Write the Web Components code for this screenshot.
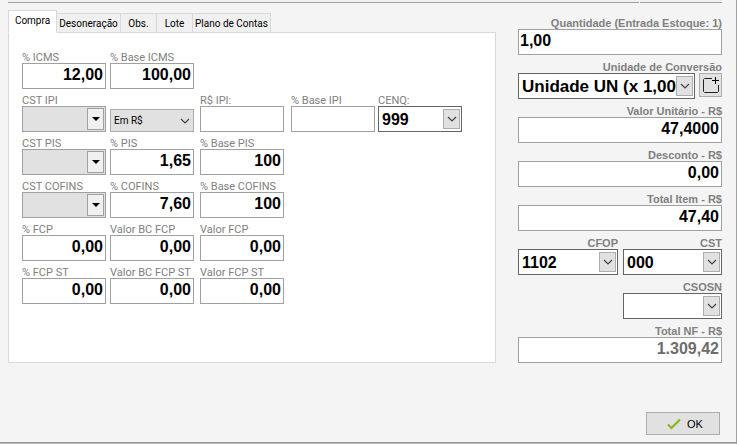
<!DOCTYPE html>
<html lang="pt-BR">
<head>
<meta charset="utf-8">
<title>Item da nota</title>
<style>
html, body { margin: 0; background: #f4f4f4; font-family: "Liberation Sans", Arial, sans-serif; }
</style>
</head>
<body>
<item-window></item-window>

<script>
const chevron = '<svg viewBox="0 0 16 16" width="16" height="16" aria-hidden="true"><path d="M4 6l4 4 4-4" fill="none" stroke="#444" stroke-width="1.2"/></svg>';
const triangle = '<svg viewBox="0 0 16 16" width="16" height="16" aria-hidden="true"><path d="M4 6h8l-4 4z" fill="#000"/></svg>';

function define(name, html, setup) {
  const template = document.createElement('template');
  template.innerHTML = html;
  customElements.define(name, class extends HTMLElement {
    connectedCallback() {
      if (this.shadowRoot) return;
      const root = this.attachShadow({ mode: 'open' });
      root.append(template.content.cloneNode(true));
      if (setup) setup(this, root);
    }
  });
}

const labelStyle = `
  *, *::before { box-sizing: border-box; }
  :host { display: flex; flex-direction: column; min-width: 0; }
  label { display: block; height: 13px; line-height: 15px; font-family: var(--label-font, Roboto, sans-serif); font-size: 11px; font-weight: var(--label-weight, 400);
    text-align: var(--label-align, left); color: #808080; white-space: nowrap; }
`;

define('text-field', `
<style>${labelStyle}
  input { display: block; width: 100%; height: 26px; margin: 0; padding: 0 2px 3px; border: 1px solid #a0a0a0; border-radius: 0;
    background: #fff; color: #000; font: bold 16px "Liberation Sans", Arial, sans-serif; text-align: right; outline: none; }
  :host([start]) input { text-align: left; padding-left: 1px; }
  :host([muted]) input { color: #6d6d6d; }
</style>
<label for="control"></label><input id="control" type="text">`, (host, root) => {
  root.querySelector('label').textContent = host.getAttribute('label');
  root.querySelector('input').value = host.getAttribute('value') || '';
});

const comboStyle = `
  .box { display: grid; grid-template-columns: minmax(0, 1fr) auto; height: 26px; padding: 2px 1px 2px 2px; border: 1px solid #646464; background: #fff; }
  select { grid-area: 1 / 1 / 2 / 3; appearance: none; width: 100%; min-width: 0; margin: 0; padding: 0 18px 0 1px; border: 0; border-radius: 0;
    background: transparent; color: #000; font: bold 16px "Liberation Sans", Arial, sans-serif; outline: none; }
  .arrow { grid-area: 1 / 2; display: grid; place-items: center; width: 17px; border: 1px solid #adadad; background: #e1e1e1; pointer-events: none; }
`;

define('select-field', `
<style>${labelStyle}${comboStyle}
  :host([kind=code]) .box { border-color: #a0a0a0; padding: 1px; background: #e1e1e1; }
  :host([kind=code]) .arrow { background: #f0f0f0; border-color: #a0a0a0; }
  :host([kind=plain]) .box { height: 23px; margin-top: 3px; padding: 0; border-color: #adadad; background: #e1e1e1; }
  :host([kind=plain]) .arrow { border: 0; background: none; }
  :host([kind=plain]) select { font-family: Roboto, sans-serif; font-size: 10px; font-weight: 400; padding-left: 3px; }
</style>
<label for="control"></label>
<div class="box"><select id="control"><option></option></select><span class="arrow"></span></div>`, (host, root) => {
  const select = root.querySelector('select');
  root.querySelector('label').textContent = host.getAttribute('label') || '';
  if (!host.getAttribute('label')) select.setAttribute('aria-label', host.getAttribute('name'));
  root.querySelector('option').textContent = host.getAttribute('value') || '';
  root.querySelector('.arrow').innerHTML = host.getAttribute('kind') === 'code' ? triangle : chevron;
});

define('tab-button', `
<style>
  :host { display: block; margin-left: -1px; }
  button { display: block; box-sizing: border-box; min-width: 37px; height: 20px; margin: 0; padding: 0 2px; border: 1px solid #d9d9d9; border-radius: 0;
    background: #f0f0f0; color: #000; font: 10px Roboto, sans-serif; white-space: nowrap; }
  :host([active]) { margin-left: 0; z-index: 1; }
  :host([active]) button { height: 23px; min-width: 49px; padding-bottom: 3px; border-bottom-color: #fff; background: #fff; }
  :host([wide]) button { min-width: 65px; }
</style>
<button type="button" role="tab"><slot></slot></button>`, (host, root) => {
  root.querySelector('button').setAttribute('aria-selected', host.hasAttribute('active'));
});

define('tax-panel', `
<style>
  :host { display: flex; flex-direction: column; min-width: 0; }
  nav { display: flex; align-items: flex-end; }
  section { flex: 1; margin-top: -1px; padding: 17px 33px 40px 13px; border: 1px solid #d9d9d9; background: #fff; }
  .fields { display: grid; grid-template-columns: 88fr 90fr 91fr 87fr 84fr; row-gap: 4px; }
  .fields > * { width: 84px; }
  .first { grid-column: 1; }
</style>
<nav role="tablist">
  <tab-button active>Compra</tab-button><tab-button wide>Desoneração</tab-button><tab-button>Obs.</tab-button><tab-button>Lote</tab-button><tab-button>Plano de Contas</tab-button>
</nav>
<section>
  <div class="fields">
    <text-field label="% ICMS" value="12,00"></text-field>
    <text-field label="% Base ICMS" value="100,00"></text-field>
    <select-field class="first" kind="code" label="CST IPI"></select-field>
    <select-field kind="plain" name="Tipo de IPI" value="Em R$"></select-field>
    <text-field label="R$ IPI:"></text-field>
    <text-field label="% Base IPI"></text-field>
    <select-field label="CENQ:" value="999"></select-field>
    <select-field class="first" kind="code" label="CST PIS"></select-field>
    <text-field label="% PIS" value="1,65"></text-field>
    <text-field label="% Base PIS" value="100"></text-field>
    <select-field class="first" kind="code" label="CST COFINS"></select-field>
    <text-field label="% COFINS" value="7,60"></text-field>
    <text-field label="% Base COFINS" value="100"></text-field>
    <text-field class="first" label="% FCP" value="0,00"></text-field>
    <text-field label="Valor BC FCP" value="0,00"></text-field>
    <text-field label="Valor FCP" value="0,00"></text-field>
    <text-field class="first" label="% FCP ST" value="0,00"></text-field>
    <text-field label="Valor BC FCP ST" value="0,00"></text-field>
    <text-field label="Valor FCP ST" value="0,00"></text-field>
  </div>
</section>`);

define('totals-panel', `
<style>
  :host { display: grid; grid-template-columns: 100fr 99fr; gap: 5px; align-content: start;
    --label-font: "Liberation Sans", Arial, sans-serif; --label-weight: 700; --label-align: right; }
  .wide { grid-column: 1 / 3; }
  .second { grid-column: 2; }
</style>
<text-field class="wide" start label="Quantidade (Entrada Estoque: 1)" value="1,00"></text-field>
<unit-field class="wide"></unit-field>
<text-field class="wide" label="Valor Unitário - R$" value="47,4000"></text-field>
<text-field class="wide" label="Desconto - R$" value="0,00"></text-field>
<text-field class="wide" label="Total Item - R$" value="47,40"></text-field>
<select-field label="CFOP" value="1102"></select-field>
<select-field label="CST" value="000"></select-field>
<select-field class="second" label="CSOSN"></select-field>
<text-field class="wide" muted label="Total NF - R$" value="1.309,42"></text-field>`);

define('unit-field', `
<style>${labelStyle}${comboStyle}
  .row { display: grid; grid-template-columns: minmax(0, 1fr) 23px; column-gap: 4px; }
  select { font-size: 17px; padding-right: 17px; }
  button { display: grid; place-items: center; height: 24px; margin: 0; padding: 0; border: 1px solid #adadad; border-radius: 0; background: #e1e1e1; }
</style>
<label for="control">Unidade de Conversão</label>
<div class="row">
  <div class="box"><select id="control"><option>Unidade UN (x 1,000)</option></select><span class="arrow">${chevron}</span></div>
  <button type="button" aria-label="Adicionar unidade">
    <svg viewBox="0 0 18 18" width="18" height="18" fill="none" stroke="#222" aria-hidden="true">
      <path d="M10 2.5H2.5L1.5 3.5V15.5L2.5 16.5H15.5L16.5 15.5V9"/><path d="M13.5 1v7M10 4.5h7" stroke="#000"/>
    </svg>
  </button>
</div>`);

define('ok-button', `
<style>
  :host { display: block; }
  button { display: flex; align-items: center; justify-content: center; gap: 6px; box-sizing: border-box; width: 74px; height: 23px; margin: 0; padding: 0 0 0 4px;
    border: 1px solid #adadad; border-radius: 0; background: #e1e1e1; color: #000; font: 11px "Liberation Sans", Arial, sans-serif; }
</style>
<button type="button">
  <svg viewBox="0 0 14 12" width="14" height="12" aria-hidden="true"><path d="M1 6.5l3.5 3.5L13 1.5" fill="none" stroke="#8ab51c" stroke-width="2.2"/></svg>
  <slot></slot>
</button>`);

define('item-window', `
<style>
  :host { display: flex; flex-direction: column; box-sizing: border-box; min-height: 100vh; border-right: 1px solid #a0a0a0; background: #f4f4f4; }
  .top { display: grid; grid-template-columns: 1fr 82px; column-gap: 1px; height: 3px; padding: 0 14px 0 8px; }
  .top i { border-bottom: 1px solid #a0a0a0; background: #f0f0f0; }
  main { display: grid; grid-template-columns: minmax(0, 1fr) 204px; column-gap: 22px; padding: 7px 14px 0 8px; }
  totals-panel { padding-top: 6px; }
  footer { display: flex; flex: 1; justify-content: flex-end; align-items: flex-end; padding: 0 16px 7px; }
  .base { height: 1px; border-top: 1px solid #999; background: #bbb; }
</style>
<div class="top"><i></i><i></i></div>
<main><tax-panel></tax-panel><totals-panel></totals-panel></main>
<footer><ok-button>OK</ok-button></footer>
<div class="base"></div>`);
</script>
</body>
</html>
